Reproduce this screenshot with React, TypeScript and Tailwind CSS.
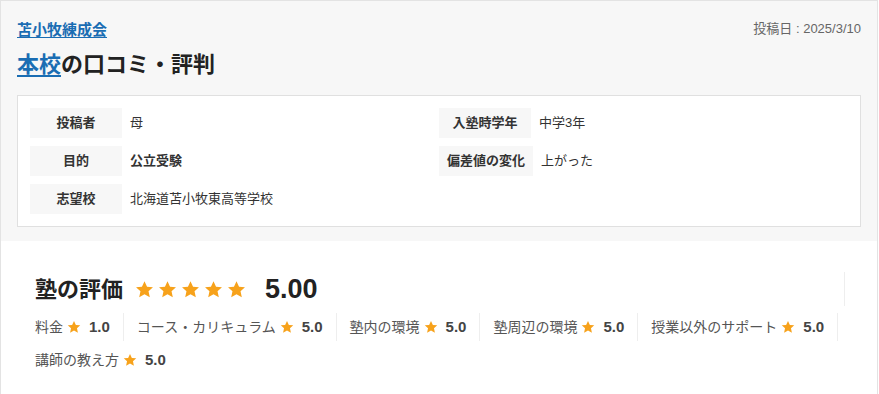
import React from "react"

const FONT = { fontFamily: '"Liberation Sans", "Noto Sans CJK JP", sans-serif' }

const INFO: { label: string; value: string; bold?: boolean }[][] = [
  [
    { label: "投稿者", value: "母" },
    { label: "目的", value: "公立受験", bold: true },
    { label: "志望校", value: "北海道苫小牧東高等学校" },
  ],
  [
    { label: "入塾時学年", value: "中学3年" },
    { label: "偏差値の変化", value: "上がった" },
  ],
]

const SCORES = [
  { label: "料金", score: "1.0" },
  { label: "コース・カリキュラム", score: "5.0" },
  { label: "塾内の環境", score: "5.0" },
  { label: "塾周辺の環境", score: "5.0" },
  { label: "授業以外のサポート", score: "5.0" },
  { label: "講師の教え方", score: "5.0" },
]

function Star({ size }: { size: number }) {
  return (
    <svg width={size} height={size} viewBox="0 0 24 24" className="flex-shrink-0">
      <path fill="#f7a21b" d="M12 1.5l3.2 6.9 7.5.8-5.6 5.1 1.6 7.4L12 17.9l-6.7 3.8 1.6-7.4-5.6-5.1 7.5-.8z" />
    </svg>
  )
}

export default function App() {
  return (
    <div style={FONT} className="w-[878px] border border-[#e3e3e3] bg-white text-[#222]">
      {/* header */}
      <div className="bg-[#f7f7f7] px-4 pt-[17px] pb-[14px]">
        <div className="flex items-start justify-between">
          <div>
            <a href="#" className="text-[15px] leading-[22px] font-semibold text-[#1a6db3] underline underline-offset-2">苫小牧練成会</a>
            <h1 className="mt-[8px] text-[22px] leading-[30px] font-bold">
              <a href="#" className="text-[#1a6db3] underline underline-offset-[3px]">本校</a>の口コミ・評判
            </h1>
          </div>
          <p className="mt-[1px] text-[13px] text-[#666]">投稿日 : 2025/3/10</p>
        </div>

        <div className="mt-[15px] grid grid-cols-2 border border-[#e0e0e0] bg-white p-3">
          {INFO.map((col, ci) => (
            <div key={ci} className="flex flex-col gap-2">
              {col.map((r) => (
                <div key={r.label} className="flex items-center gap-2">
                  <span className="flex h-[30px] min-w-[92px] items-center justify-center bg-[#f7f7f7] px-2 text-[13px] font-bold text-[#333]">{r.label}</span>
                  <span className={`text-[13px] text-[#333] ${r.bold ? "font-bold" : ""}`}>{r.value}</span>
                </div>
              ))}
            </div>
          ))}
        </div>
      </div>

      {/* rating */}
      <div className="pl-[34px] pr-[32px] pt-[31px] pb-[20px]">
        <div className="flex h-[34px] items-center border-r border-[#eee]">
          <h2 className="text-[22px] font-bold">塾の評価</h2>
          <div className="ml-[12px] flex gap-[4px]">
            {[0, 1, 2, 3, 4].map((i) => <Star key={i} size={19} />)}
          </div>
          <span className="ml-[19px] text-[27px] font-bold text-[#222]">5.00</span>
        </div>
        <div className="mt-[7px] flex flex-wrap gap-y-[5px]">
          {SCORES.map((s, i) => (
            <div key={s.label} className={`flex h-[28px] items-center ${i === 0 || i === 5 ? "pl-0" : "pl-[13px]"} ${i === 5 ? "" : "border-r border-[#eee] pr-[13px]"}`}>
              <span className="text-[14px] text-[#555]">{s.label}</span>
              <span className="ml-[4px]"><Star size={14} /></span>
              <span className="ml-[8px] text-[15px] font-bold text-[#444]">{s.score}</span>
            </div>
          ))}
        </div>
      </div>
    </div>
  )
}
